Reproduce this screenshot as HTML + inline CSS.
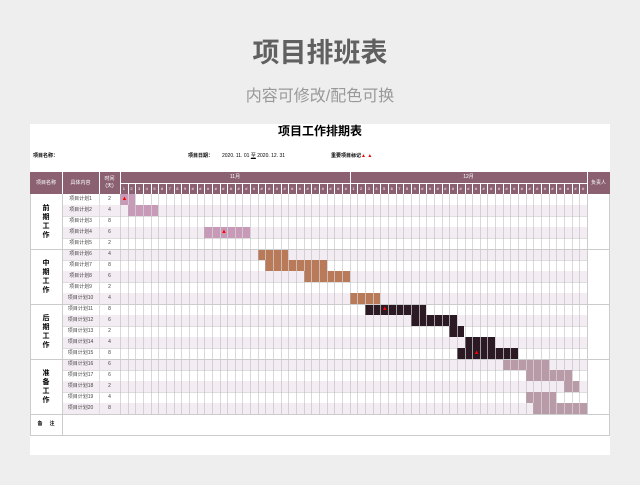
<!DOCTYPE html>
<html><head><meta charset="utf-8">
<style>
body{margin:0;width:640px;height:485px;background:#eeeeee;position:relative;overflow:hidden;font-family:"Liberation Sans","Noto Sans CJK SC",sans-serif}
.a{position:absolute}
.t{white-space:nowrap}
</style></head><body>
<div class="a t" style="left:0;width:640px;top:36px;text-align:center;font-size:27px;color:#606060;font-weight:bold;line-height:34px">项目排班表</div>
<div class="a t" style="left:0;width:640px;top:86px;text-align:center;font-size:16px;color:#999;line-height:22px">内容可修改/配色可换</div>
<div class="a" style="left:30px;top:124px;width:580px;height:331px;background:#fff"></div>
<div class="a t" style="left:30px;width:580px;top:123px;text-align:center;font-size:12px;font-weight:bold;color:#000;line-height:16px">项目工作排期表</div>
<div class="a t" style="left:33px;top:152px;font-size:5px;font-weight:bold;line-height:8px">项目名称：</div>
<div class="a t" style="left:188px;top:152px;font-size:5px;font-weight:bold;line-height:8px">项目日期：</div>
<div class="a t" style="left:222px;top:152px;font-size:5px;line-height:8px">2020. 11. 01 <u>至</u> 2020. 12. 31</div>
<div class="a t" style="left:331px;top:152px;font-size:5px;font-weight:bold;line-height:8px">重要项目标记<span style="color:#e00">▲ ▲</span></div>
<div id="g"></div>
<script>
var g=document.getElementById('g'),h='';
function d(x,y,w,hh,s){h+='<div class="a" style="left:'+x+'px;top:'+y+'px;width:'+w+'px;height:'+hh+'px;'+(s||'')+'"></div>';}
function tx(x,y,w,hh,t,s){h+='<div class="a t" style="left:'+x+'px;top:'+y+'px;width:'+w+'px;height:'+hh+'px;line-height:'+hh+'px;text-align:center;font-size:5px;'+(s||'')+'">'+t+'</div>';}
var HC='#8b6172',X0=120,W=467/61,Y0=194,RH=11;
d(30,172,580,22,'background:'+HC);
tx(30,172,32,22,'项目名称','color:#fff');
tx(62,172,37,22,'具体内容','color:#fff');
tx(99,172,21,22,'时间<br>(天)','color:#fff;line-height:7px;padding-top:4px;height:18px');
tx(587,172,23,22,'负责人','color:#fff');
tx(120,172,230,11,'11月','color:#fff');
tx(350,172,237,11,'12月','color:#fff');
d(350,172,1,22,'background:#fff');d(120,183,467,1,'background:#fff');
d(62,172,1,22,'background:#fff');d(99,172,1,22,'background:#fff');d(120,172,1,22,'background:#fff');d(587,172,1,22,'background:#fff');
for(var i=0;i<61;i++){var x=X0+i*W;var n=i<30?i+1:i-29;
 tx(x,184,W,10,n<10?n:'#','color:#fff;font-size:4px');
 d(x,184,0.6,10,'background:#fff');}
var col=['#c79ab8','#b97a5a','#2b1a23','#b99ba8'];
var bars=[[0,2,0],[1,4],[0,0],[11,6,13],[0,0],[18,4],[19,8],[24,6],[0,0],[30,4],[32,8,34],[38,6],[43,2],[45,4],[44,8,46],[50,6],[53,6],[58,2],[53,4],[54,7]];
var dur=[2,4,8,6,2,4,8,6,2,4,8,6,2,4,8,6,6,2,4,8];
for(var r=0;r<20;r++){var y=Y0+r*RH;
 if(r%2==1)d(62,y,525,RH,'background:#f3ecf2');
 tx(62,y,37,RH,'项目计划'+(r+1),'color:#444');
 tx(99,y,21,RH,dur[r],'color:#444');
 var b=bars[r];if(b[1]>0){d(X0+b[0]*W,y,b[1]*W,RH,'background:'+col[Math.floor(r/5)]);}
 d(62,y+RH-0.5,525,0.6,'background:#ddd');
}
for(var i=0;i<=61;i++)d(X0+i*W,Y0,0.6,220,'background:rgba(180,180,180,.5)');
for(var r=0;r<20;r++){var b=bars[r];if(b[1]>0)for(var k=1;k<b[1];k++)d(X0+(b[0]+k)*W,Y0+r*RH,0.6,RH,'background:rgba(255,255,255,.35)');
 if(b[2]!==undefined)h+='<div class="a t" style="left:'+(X0+b[2]*W+1.5)+'px;top:'+(Y0+r*RH+1)+'px;font-size:6px;color:#f00;line-height:9px">▲</div>';}
var secs=['前期工作','中期工作','后期工作','准备工作'];
for(var s=0;s<4;s++){var y=Y0+s*55;
 h+='<div class="a" style="left:30px;top:'+y+'px;width:32px;height:55px;display:flex;align-items:center;justify-content:center;font-size:7px;font-weight:bold;line-height:9px;text-align:center">'+secs[s].split('').join('<br>')+'</div>';
 d(30,y+55,580,0.8,'background:#ccc');}
d(30,194,0.8,241,'background:#ccc');d(62,194,0.8,241,'background:#ccc');d(99,194,0.8,220,'background:#ddd');d(587,194,0.8,220,'background:#ccc');d(609,194,0.8,241,'background:#ccc');
d(30,435,580,1,'background:#ccc');
tx(30,414,32,21,'备&nbsp;&nbsp;&nbsp;&nbsp;&nbsp;注','font-weight:bold');
g.innerHTML=h;
</script>
</body></html>
